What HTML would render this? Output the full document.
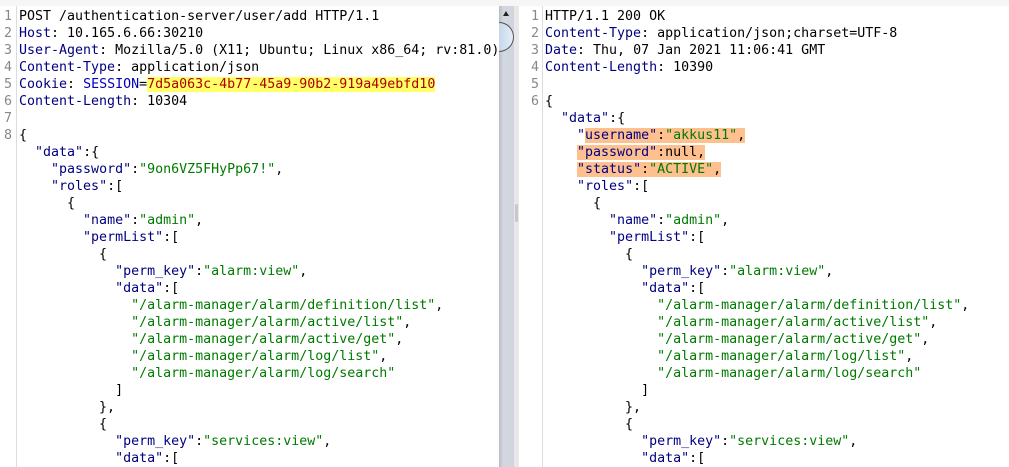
<!DOCTYPE html>
<html><head><meta charset="utf-8"><style>
html,body{margin:0;padding:0;}
body{width:1009px;height:467px;overflow:hidden;background:#fff;position:relative;font-family:"DejaVu Sans Mono","Liberation Mono",monospace;font-size:13.3px;}
.top{position:absolute;left:0;top:0;width:1009px;height:6px;background:#f6f6f6;}
.l{position:absolute;height:17px;line-height:17px;white-space:pre;color:#000;}
.n{position:absolute;height:17px;line-height:17px;color:#888;width:12px;text-align:right;}
.k{color:#000080}.s{color:#007a00}.b{color:#0000c0}.r{color:#b00000}
.hy{background:#ffff66}.ho{background:#fdc08e}
.sep{position:absolute;top:6px;width:1px;height:461px;background:#ddd;}
</style></head><body>
<div class="top"></div>
<div class="sep" style="left:16px"></div>
<div class="sep" style="left:542px"></div>
<div style="position:absolute;left:499px;top:6px;width:15px;height:461px;background:linear-gradient(to right,#b8bcc4,#d4d8e0 30%,#d0d4dc);"></div>
<div style="position:absolute;left:514px;top:6px;width:5px;height:461px;background:#e8e8e8;"></div>
<div style="position:absolute;left:503px;top:11px;width:0;height:0;border-left:3px solid transparent;border-right:3px solid transparent;border-bottom:5px solid #222;"></div>
<div style="position:absolute;left:499px;top:22px;width:15px;height:30px;border:1px solid #555;border-left:none;border-radius:0 16px 16px 0;background:linear-gradient(to right,#c6d8ea,#e4eef8);box-sizing:border-box;"></div>
<div style="position:absolute;left:515px;top:204px;width:3px;height:18px;background:#c8c8c8;border-radius:2px;"></div>

<div class="n" style="left:0;top:8px">1</div>
<div class="n" style="left:0;top:25px">2</div>
<div class="n" style="left:0;top:42px">3</div>
<div class="n" style="left:0;top:59px">4</div>
<div class="n" style="left:0;top:76px">5</div>
<div class="n" style="left:0;top:93px">6</div>
<div class="n" style="left:0;top:110px">7</div>
<div class="n" style="left:0;top:127px">8</div>
<div class="l" style="left:19px;top:8px">POST /authentication-server/user/add HTTP/1.1</div>
<div class="l" style="left:19px;top:25px"><span class="k">Host</span>: 10.165.6.66:30210</div>
<div class="l" style="left:19px;top:42px"><span class="k">User-Agent</span>: Mozilla/5.0 (X11; Ubuntu; Linux x86_64; rv:81.0)</div>
<div class="l" style="left:19px;top:59px"><span class="k">Content-Type</span>: application/json</div>
<div class="l" style="left:19px;top:76px"><span class="k">Cookie</span>: <span class="b">SESSION</span>=<span class="r hy">7d5a063c-4b77-45a9-90b2-919a49ebfd10</span></div>
<div class="l" style="left:19px;top:93px"><span class="k">Content-Length</span>: 10304</div>
<div class="l" style="left:19px;top:127px">{</div>
<div class="l" style="left:19px;top:144px">  <span class="k">"data"</span>:{</div>
<div class="l" style="left:19px;top:161px">    <span class="k">"password"</span>:<span class="s">"9on6VZ5FHyPp67!"</span>,</div>
<div class="l" style="left:19px;top:178px">    <span class="k">"roles"</span>:[</div>
<div class="l" style="left:19px;top:195px">      {</div>
<div class="l" style="left:19px;top:212px">        <span class="k">"name"</span>:<span class="s">"admin"</span>,</div>
<div class="l" style="left:19px;top:229px">        <span class="k">"permList"</span>:[</div>
<div class="l" style="left:19px;top:246px">          {</div>
<div class="l" style="left:19px;top:263px">            <span class="k">"perm_key"</span>:<span class="s">"alarm:view"</span>,</div>
<div class="l" style="left:19px;top:280px">            <span class="k">"data"</span>:[</div>
<div class="l" style="left:19px;top:297px">              <span class="s">"/alarm-manager/alarm/definition/list"</span>,</div>
<div class="l" style="left:19px;top:314px">              <span class="s">"/alarm-manager/alarm/active/list"</span>,</div>
<div class="l" style="left:19px;top:331px">              <span class="s">"/alarm-manager/alarm/active/get"</span>,</div>
<div class="l" style="left:19px;top:348px">              <span class="s">"/alarm-manager/alarm/log/list"</span>,</div>
<div class="l" style="left:19px;top:365px">              <span class="s">"/alarm-manager/alarm/log/search"</span></div>
<div class="l" style="left:19px;top:382px">            ]</div>
<div class="l" style="left:19px;top:399px">          },</div>
<div class="l" style="left:19px;top:416px">          {</div>
<div class="l" style="left:19px;top:433px">            <span class="k">"perm_key"</span>:<span class="s">"services:view"</span>,</div>
<div class="l" style="left:19px;top:450px">            <span class="k">"data"</span>:[</div>

<div class="n" style="left:527px;top:8px">1</div>
<div class="n" style="left:527px;top:25px">2</div>
<div class="n" style="left:527px;top:42px">3</div>
<div class="n" style="left:527px;top:59px">4</div>
<div class="n" style="left:527px;top:76px">5</div>
<div class="n" style="left:527px;top:93px">6</div>
<div class="l" style="left:545px;top:8px">HTTP/1.1 200 OK</div>
<div class="l" style="left:545px;top:25px"><span class="k">Content-Type</span>: application/json;charset=UTF-8</div>
<div class="l" style="left:545px;top:42px"><span class="k">Date</span>: Thu, 07 Jan 2021 11:06:41 GMT</div>
<div class="l" style="left:545px;top:59px"><span class="k">Content-Length</span>: 10390</div>
<div class="l" style="left:545px;top:93px">{</div>
<div class="l" style="left:545px;top:110px">  <span class="k">"data"</span>:{</div>
<div class="l" style="left:545px;top:127px">    <span class="k">"<span class="ho">username"</span></span><span class="ho">:<span class="s">"akkus11"</span>,</span></div>
<div class="l" style="left:545px;top:144px">    <span class="ho"><span class="k">"password"</span>:null,</span></div>
<div class="l" style="left:545px;top:161px">    <span class="ho"><span class="k">"status"</span>:<span class="s">"ACTIVE"</span>,</span></div>
<div class="l" style="left:545px;top:178px">    <span class="k">"roles"</span>:[</div>
<div class="l" style="left:545px;top:195px">      {</div>
<div class="l" style="left:545px;top:212px">        <span class="k">"name"</span>:<span class="s">"admin"</span>,</div>
<div class="l" style="left:545px;top:229px">        <span class="k">"permList"</span>:[</div>
<div class="l" style="left:545px;top:246px">          {</div>
<div class="l" style="left:545px;top:263px">            <span class="k">"perm_key"</span>:<span class="s">"alarm:view"</span>,</div>
<div class="l" style="left:545px;top:280px">            <span class="k">"data"</span>:[</div>
<div class="l" style="left:545px;top:297px">              <span class="s">"/alarm-manager/alarm/definition/list"</span>,</div>
<div class="l" style="left:545px;top:314px">              <span class="s">"/alarm-manager/alarm/active/list"</span>,</div>
<div class="l" style="left:545px;top:331px">              <span class="s">"/alarm-manager/alarm/active/get"</span>,</div>
<div class="l" style="left:545px;top:348px">              <span class="s">"/alarm-manager/alarm/log/list"</span>,</div>
<div class="l" style="left:545px;top:365px">              <span class="s">"/alarm-manager/alarm/log/search"</span></div>
<div class="l" style="left:545px;top:382px">            ]</div>
<div class="l" style="left:545px;top:399px">          },</div>
<div class="l" style="left:545px;top:416px">          {</div>
<div class="l" style="left:545px;top:433px">            <span class="k">"perm_key"</span>:<span class="s">"services:view"</span>,</div>
<div class="l" style="left:545px;top:450px">            <span class="k">"data"</span>:[</div>
</body></html>
